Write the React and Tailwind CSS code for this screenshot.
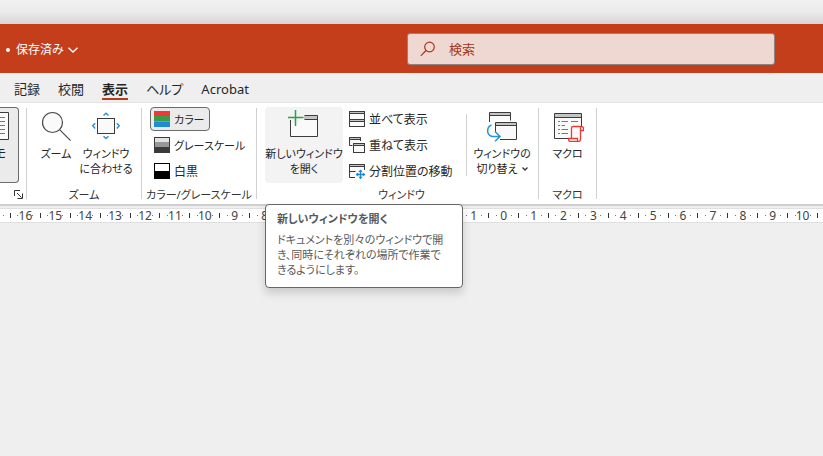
import React, { useState } from "react";
import clsx from "clsx";

const tabs = ["記録", "校閲", "表示", "ヘルプ", "Acrobat"];

// 16 ... 1, 0, 1 ... 10
const rulerMarks = Array.from({ length: 27 }, (_, i) => Math.abs(i - 16));

function SearchIcon() {
  return (
    <svg width="16" height="16" viewBox="0 0 16 16" fill="none" stroke="#a5361a" strokeWidth="1.2">
      <circle cx="9.5" cy="6" r="4.8" />
      <path d="M6 9.5L0.8 14.8" />
    </svg>
  );
}

function ZoomIcon() {
  return (
    <svg width="32" height="32" viewBox="0 0 32 32" fill="none" stroke="#4a4a4a" strokeWidth="1.2">
      <circle cx="12.5" cy="12.5" r="10" fill="#fafafa" />
      <path d="M19.8 19.8L30.6 30.6" />
    </svg>
  );
}

function FitIcon() {
  return (
    <svg width="32" height="32" viewBox="0 0 32 32" fill="none">
      <rect x="7.5" y="8.5" width="17" height="15" fill="#fafafa" stroke="#3b3b3b" />
      <g stroke="#2b93d9" strokeWidth="1.5">
        <path d="M13.5 5.5L16 3.2L18.5 5.5" />
        <path d="M13.5 26.2L16 28.5L18.5 26.2" />
        <path d="M5.2 13.2L2.8 15.8L5.2 18.4" />
        <path d="M26.8 13.2L29.2 15.8L26.8 18.4" />
      </g>
    </svg>
  );
}

function NewWindowIcon() {
  return (
    <svg width="32" height="32" viewBox="0 0 32 32" fill="none">
      <path d="M2.5 10V26.5H29.5V5.5H16V9.5H11V13H2.5Z" fill="#fafafa" />
      <path d="M16 5.5H29.5V9.5H16Z" fill="#c4c4c4" />
      <path d="M16.5 5.5H29.5V26.5H2.5V10M16.5 9.5H29.5" stroke="#3b3b3b" />
      <path d="M7.5 0V16M0 7.5H15.5" stroke="#27a348" strokeWidth="1.5" />
    </svg>
  );
}

function ArrangeIcon() {
  return (
    <svg width="16" height="16" viewBox="0 0 16 16" fill="none" stroke="#3b3b3b">
      <rect x="0.5" y="0.5" width="15" height="15" fill="#fafafa" />
      <path d="M0.5 0.5H15.5V2.5H0.5ZM0.5 8.5H15.5V10.5H0.5Z" fill="#c4c4c4" />
    </svg>
  );
}

function CascadeIcon() {
  return (
    <svg width="16" height="16" viewBox="0 0 16 16" fill="none" stroke="#3b3b3b">
      <path d="M3.5 8.5H0.5V0.5H11.5V4" fill="#fafafa" />
      <path d="M0.5 0.5H11.5V2.5H0.5Z" fill="#c4c4c4" />
      <rect x="4.5" y="6.5" width="11" height="9" fill="#fafafa" />
      <path d="M4.5 6.5H15.5V8.5H4.5Z" fill="#c4c4c4" />
    </svg>
  );
}

function SplitIcon() {
  return (
    <svg width="16" height="16" viewBox="0 0 16 16" fill="none">
      <path d="M6 14.5H0.5V1.5H15.5V7" fill="#fafafa" stroke="#3b3b3b" />
      <path d="M0.5 1.5H15.5V3.5H0.5Z" fill="#c4c4c4" stroke="#3b3b3b" />
      <path d="M0.5 8.5H6.5" stroke="#3b3b3b" />
      <path d="M11.5 7V16M7 11.5H16" stroke="#1b87d3" strokeWidth="1.3" />
      <path
        d="M11.5 6.5L13.6 9H9.4ZM11.5 16L13.6 13.7H9.4ZM6.8 11.5L9.2 9.4V13.6ZM16 11.5L13.8 9.4V13.6Z"
        fill="#1b87d3"
      />
    </svg>
  );
}

function SwitchIcon() {
  return (
    <svg width="32" height="32" viewBox="0 0 32 32" fill="none">
      <path d="M3.5 12V2.5H24.5V10.5H9V12Z" fill="#fafafa" />
      <path d="M3.5 2.5H24.5V5.5H3.5Z" fill="#c4c4c4" />
      <path d="M3.5 12V2.5H24.5V10.5M3.5 5.5H24.5" stroke="#3b3b3b" />
      <path d="M9.5 12.5H30.5V29.5H13L9.5 23Z" fill="#fafafa" />
      <path d="M9.5 12.5H30.5V15.5H9.5Z" fill="#c4c4c4" />
      <path d="M9.5 22V12.5H30.5V29.5H14M9.5 15.5H30.5" stroke="#3b3b3b" />
      <path d="M5.5 15C0.5 17 0 24.5 6 26.5H13.5M9 21.5L14 26.5L9 31.2" stroke="#2b93d9" strokeWidth="1.5" />
    </svg>
  );
}

function MacroIcon() {
  return (
    <svg width="32" height="32" viewBox="0 0 32 32" fill="none">
      <rect x="2.5" y="3.5" width="27" height="25" fill="#fafafa" />
      <path d="M2.5 3.5H29.5V7.5H2.5Z" fill="#c4c4c4" />
      <path d="M16 28.5H2.5V3.5H29.5V16M2.5 7.5H29.5" stroke="#3b3b3b" />
      <path
        d="M6 11.5H8M9.5 11.5H16M19 11.5H26M6 15.5H8M9.5 15.5H13M6 19.5H8M9.5 19.5H16M6 23.5H8M9.5 23.5H16"
        stroke="#777"
      />
      <path
        d="M19.5 28.5V18C19.5 17 20.2 16.5 21 16.5H29.5C31 16.5 31.5 17.5 31.5 18.5V20.5H28.5V29C28.5 30.5 28 31.5 26.5 31.5H18C16.8 31.5 16.5 30.5 16.5 28.5H25.5V31"
        fill="#fafafa"
        stroke="#ee3a36"
        strokeWidth="1.3"
      />
      <path d="M28.5 20.5V18C28.5 17 29 16.5 29.5 16.5" stroke="#ee3a36" strokeWidth="1.3" />
    </svg>
  );
}

function Chevron({ className }) {
  return (
    <svg width="10" height="6" viewBox="0 0 10 6" fill="none" stroke="currentColor" strokeWidth="1.3" className={className}>
      <path d="M0.5 0.7L5 5L9.5 0.7" />
    </svg>
  );
}

function Divider() {
  return <div className="mt-px mb-1 w-px shrink-0 bg-[#d0d0d0]" />;
}

function Group({ label, className, children }) {
  return (
    <section className={clsx("flex shrink-0 flex-col", className)}>
      <div className="flex h-[76px]">{children}</div>
      <h2 className="mt-1 text-center text-[11px] leading-4 whitespace-nowrap text-[#333]">{label}</h2>
    </section>
  );
}

function LargeButton({ icon, className, children, ...rest }) {
  return (
    <button
      type="button"
      className={clsx("flex h-full shrink-0 flex-col items-center rounded pt-[3px] text-[11px] leading-[15px] whitespace-nowrap", className)}
      {...rest}
    >
      {icon}
      <span className="mt-1">{children}</span>
    </button>
  );
}

function SmallButton({ icon, active, className, children }) {
  return (
    <button
      type="button"
      className={clsx(
        "flex h-6 items-center gap-1 rounded border px-[3px] leading-4 whitespace-nowrap",
        active ? "w-[60px] border-[#6b6b6b] bg-[#ebebeb]" : "border-transparent",
        className
      )}
    >
      {icon}
      <span className="pt-0.5">{children}</span>
    </button>
  );
}

function Ruler() {
  return (
    <div className="flex h-[15px] items-center border-y border-[#e0e0e0] bg-white pl-[3px] text-[12px] leading-3 text-[#444]">
      <span className="mr-1.5 h-px w-px shrink-0 bg-[#777]" />
      {rulerMarks.map((mark, i) => (
        <div key={i} className="flex flex-1 items-center">
          <span className="mr-auto h-[5px] w-px bg-[#333]" />
          <span className="h-px w-px bg-[#777]" />
          <span className="flex w-[14px] justify-center">{mark}</span>
          <span className="mr-auto h-px w-px bg-[#777]" />
        </div>
      ))}
      <span className="mr-[5px] h-[5px] w-px shrink-0 bg-[#333]" />
    </div>
  );
}

export default function App() {
  const [activeTab, setActiveTab] = useState("表示");
  const [query, setQuery] = useState("");

  return (
    <div className="min-h-screen overflow-hidden bg-[#efefef] font-['Noto_Sans','Noto_Sans_CJK_JP',sans-serif] text-[#262626] [font-feature-settings:'palt']">
      <div className="h-6 bg-linear-to-b from-[#f1f1f1] via-[#ebebeb] to-[#d6d6d6]" />

      <header className="flex h-[49px] items-center justify-between bg-[#c43e1c] pr-12 pl-1.5 text-white">
        <button type="button" className="flex items-center pt-0.5 text-[12px] leading-4 whitespace-nowrap">
          <span className="mr-1.5 h-1 w-1 rounded-full bg-white" />
          保存済み
          <Chevron className="ml-1" />
        </button>
        <label className="flex h-8 w-[368px] items-center rounded-[3px] border border-[#8c8583] bg-[#efd8d1] pl-3">
          <SearchIcon />
          <input
            type="text"
            aria-label="検索"
            placeholder="検索"
            value={query}
            onChange={(e) => setQuery(e.target.value)}
            className="ml-[13px] min-w-0 flex-1 bg-transparent text-[13px] leading-4 text-[#a5361a] outline-none placeholder:text-[#a5361a]"
          />
        </label>
      </header>

      <nav className="flex h-[30px] items-start gap-[18px] border-b border-[#e4e4e4] pt-2 pl-3.5">
        {tabs.map((tab) => (
          <button
            key={tab}
            type="button"
            onClick={() => setActiveTab(tab)}
            className={clsx(
              "border-b-2 text-[13px] leading-[17px] whitespace-nowrap",
              tab === activeTab ? "border-[#b83b1c] font-bold" : "border-transparent"
            )}
          >
            {tab}
          </button>
        ))}
      </nav>

      <main>
        <div className="flex border-b-2 border-[#cfcfcf] bg-white pt-1 pb-px">
          <div className="flex w-[26px] shrink-0 flex-col">
            <button
              type="button"
              aria-label="メモ"
              className="flex h-[76px] w-[19px] flex-col items-start rounded-r border border-l-0 border-[#6b6b6b] bg-[#ebebeb] pt-1 text-[12px] leading-[15px]"
            >
              <svg width="9" height="28" viewBox="0 0 9 28" fill="none">
                <path d="M0 0.5H8.5V27.5H0" fill="#fafafa" stroke="#3b3b3b" />
                <path d="M0 5.5H5M0 9.5H5M0 13.5H5M0 17.5H5M0 21.5H5" stroke="#777" />
              </svg>
              <span className="mt-1.5 flex w-[6px] justify-end">モ</span>
            </button>
            <button type="button" aria-label="表示オプション" className="mt-[7px] mr-[3px] self-end">
              <svg width="9" height="9" viewBox="0 0 9 9" fill="none" stroke="#333">
                <path d="M0.5 6V0.5H6M3 3L7.5 7.5M8.5 3.5V8.5H3.5" />
              </svg>
            </button>
          </div>
          <Divider />

          <Group label="ズーム" className="w-[114px] px-1">
            <LargeButton icon={<ZoomIcon />} className="w-[50px]">
              ズーム
            </LargeButton>
            <LargeButton icon={<FitIcon />} className="w-[50px]">
              ウィンドウ
              <br />
              に合わせる
            </LargeButton>
          </Group>
          <Divider />

          <Group label="カラー/グレースケール" className="w-[114px] px-1">
            <div className="flex flex-col gap-0.5 pl-1 text-[11px]">
              <SmallButton
                active
                icon={
                  <svg width="16" height="16" viewBox="0 0 16 16">
                    <path d="M0 0H16V5H0Z" fill="#ee3a36" />
                    <path d="M0 5H16V10.5H0Z" fill="#3a9b4a" />
                    <path d="M0 10.5H16V16H0Z" fill="#1f8ad6" />
                  </svg>
                }
              >
                カラー
              </SmallButton>
              <SmallButton
                icon={
                  <svg width="16" height="16" viewBox="0 0 16 16">
                    <path d="M0 0H16V16H0Z" fill="#3b3b3b" />
                    <path d="M1 1H15V5H1Z" fill="#e2e2e2" />
                    <path d="M1 5H15V10H1Z" fill="#979797" />
                  </svg>
                }
              >
                グレースケール
              </SmallButton>
              <SmallButton
                className="text-[12px]"
                icon={
                  <svg width="16" height="16" viewBox="0 0 16 16">
                    <path d="M0 0H16V16H0Z" />
                    <path d="M1 1H15V8H1Z" fill="#fff" />
                  </svg>
                }
              >
                白黒
              </SmallButton>
            </div>
          </Group>
          <Divider />

          <Group label="ウィンドウ" className="w-[281px] pl-2">
            <div className="relative shrink-0">
              <LargeButton
                icon={<NewWindowIcon />}
                className="w-[78px] bg-[#f3f3f3]"
                aria-describedby="new-window-tip"
              >
                新しいウィンドウ
                <br />
                を開く
              </LargeButton>
              <div
                id="new-window-tip"
                role="tooltip"
                className="absolute top-[97px] left-0 z-10 h-[84px] w-[198px] rounded border border-[#666] bg-white px-[11px] pt-1.5 text-[11px] leading-[15px] whitespace-nowrap text-[#595959] shadow-[0_5px_10px_rgba(0,0,0,0.16)]"
              >
                <p className="mb-1.5 font-bold">新しいウィンドウを開く</p>
                <p>
                  ドキュメントを別々のウィンドウで開
                  <br />
                  き、同時にそれぞれの場所で作業で
                  <br />
                  きるようにします。
                </p>
              </div>
            </div>
            <div className="ml-0.5 flex w-[121px] shrink-0 flex-col gap-0.5 text-[12px]">
              <SmallButton icon={<ArrangeIcon />}>並べて表示</SmallButton>
              <SmallButton icon={<CascadeIcon />}>重ねて表示</SmallButton>
              <SmallButton icon={<SplitIcon />}>分割位置の移動</SmallButton>
            </div>
            <div className="my-[7px] w-px bg-[#d0d0d0]" />
            <LargeButton icon={<SwitchIcon />} className="w-[70px]">
              ウィンドウの
              <br />
              <span className="inline-flex items-center">
                切り替え
                <svg width="6" height="4" viewBox="0 0 6 4" fill="none" stroke="#333" strokeWidth="1.3" className="ml-1">
                  <path d="M0.5 0.5L3 3L5.5 0.5" />
                </svg>
              </span>
            </LargeButton>
          </Group>
          <Divider />

          <Group label="マクロ" className="w-[57px] px-1">
            <LargeButton icon={<MacroIcon />} className="w-[49px]">
              マクロ
            </LargeButton>
          </Group>
          <Divider />
        </div>

        <div className="pt-[2px]">
          <Ruler />
        </div>
      </main>
    </div>
  );
}
